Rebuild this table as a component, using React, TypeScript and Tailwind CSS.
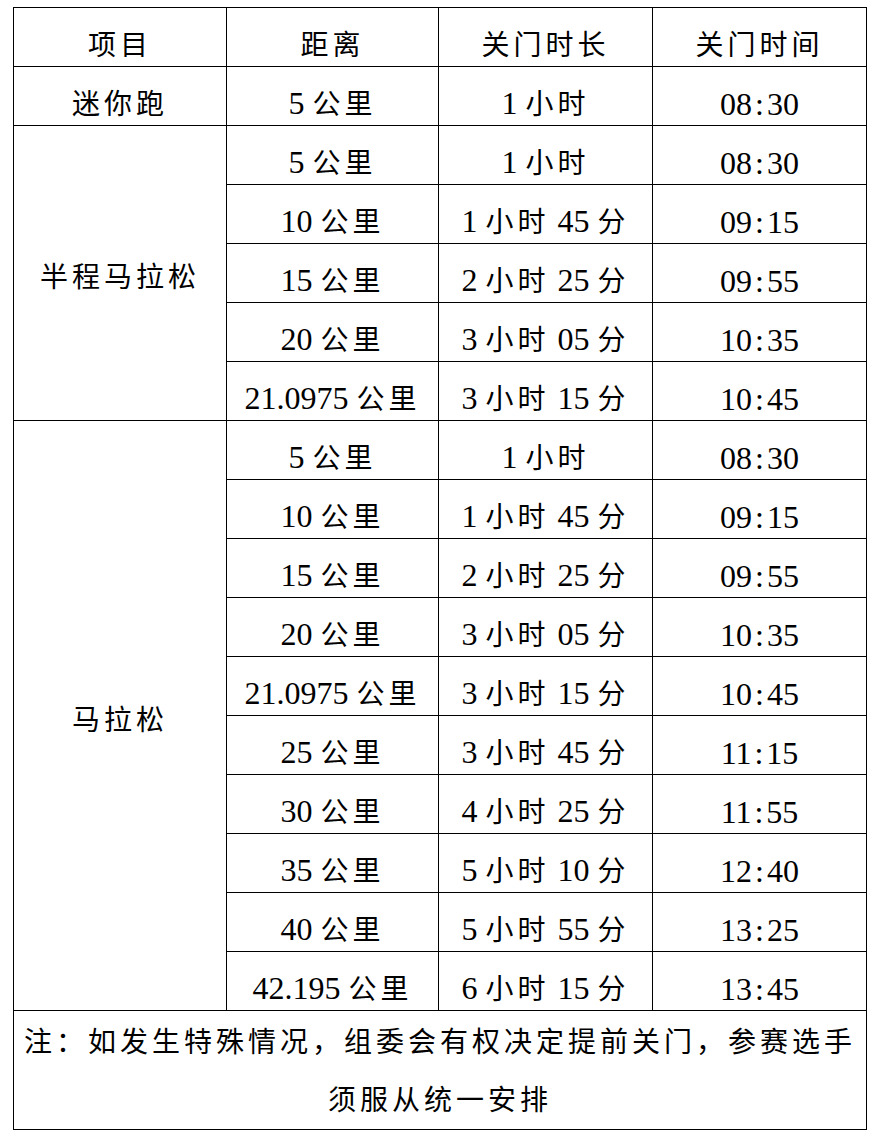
import React from "react";

type Row = [string, string, string];

// 关门时间表
const halfRows: Row[] = [
  ["5 公里", "1 小时", "08:30"],
  ["10 公里", "1 小时 45 分", "09:15"],
  ["15 公里", "2 小时 25 分", "09:55"],
  ["20 公里", "3 小时 05 分", "10:35"],
  ["21.0975 公里", "3 小时 15 分", "10:45"],
];

const fullRows: Row[] = [
  ["5 公里", "1 小时", "08:30"],
  ["10 公里", "1 小时 45 分", "09:15"],
  ["15 公里", "2 小时 25 分", "09:55"],
  ["20 公里", "3 小时 05 分", "10:35"],
  ["21.0975 公里", "3 小时 15 分", "10:45"],
  ["25 公里", "3 小时 45 分", "11:15"],
  ["30 公里", "4 小时 25 分", "11:55"],
  ["35 公里", "5 小时 10 分", "12:40"],
  ["40 公里", "5 小时 55 分", "13:25"],
  ["42.195 公里", "6 小时 15 分", "13:45"],
];

const cjk = /[\u3000-\u303f\u4e00-\u9fff\uff00-\uffef]/;

// CJK runs get a smaller size + tracking so they land on a 32px grid like the original
const Txt: React.FC<{ s: string }> = ({ s }) => (
  <>
    {s.split(/([\u3000-\u303f\u4e00-\u9fff\uff00-\uffef]+|:)/).map((p, i) =>
      cjk.test(p) ? (
        <span key={i} className="text-[28px] tracking-[4px]">
          {p}
        </span>
      ) : p === ":" ? (
        <span key={i} className="mx-[3px]">
          :
        </span>
      ) : (
        <React.Fragment key={i}>{p}</React.Fragment>
      )
    )}
  </>
);

const Cell: React.FC<{ s: string }> = ({ s }) => (
  <td className="border border-black p-0 pt-[16px] text-center align-middle">
    <Txt s={s} />
  </td>
);

const GroupRows: React.FC<{ name: string; rows: Row[] }> = ({ name, rows }) => (
  <>
    {rows.map((r, i) => (
      <tr key={i} className="h-[59px]">
        {i === 0 && (
          <td
            rowSpan={rows.length}
            className="border border-black p-0 pt-[8px] text-center align-middle"
          >
            <Txt s={name} />
          </td>
        )}
        <Cell s={r[0]} />
        <Cell s={r[1]} />
        <Cell s={r[2]} />
      </tr>
    ))}
  </>
);

export default function App() {
  return (
    <div className="min-h-[1138px] bg-white pt-[7px] pl-[13px] font-['Liberation_Serif','Noto_Sans_CJK_SC',serif] text-[32px] leading-[40px] text-black">
      <table className="w-[853px] table-fixed border-collapse border border-black">
        <colgroup>
          <col className="w-[213px]" />
          <col className="w-[212px]" />
          <col className="w-[214px]" />
          <col className="w-[214px]" />
        </colgroup>
        <tbody>
          <tr className="h-[59px]">
            <Cell s="项目" />
            <Cell s="距离" />
            <Cell s="关门时长" />
            <Cell s="关门时间" />
          </tr>
          <tr className="h-[59px]">
            <Cell s="迷你跑" />
            <Cell s="5 公里" />
            <Cell s="1 小时" />
            <Cell s="08:30" />
          </tr>
          <GroupRows name="半程马拉松" rows={halfRows} />
          <GroupRows name="马拉松" rows={fullRows} />
          <tr className="h-[114px]">
            <td
              colSpan={4}
              className="border border-black p-0 pt-[2px] text-center align-top leading-[56px]"
            >
              <div>
                <Txt s="注：如发生特殊情况，组委会有权决定提前关门，参赛选手" />
              </div>
              <div>
                <Txt s="须服从统一安排" />
              </div>
            </td>
          </tr>
        </tbody>
      </table>
    </div>
  );
}
